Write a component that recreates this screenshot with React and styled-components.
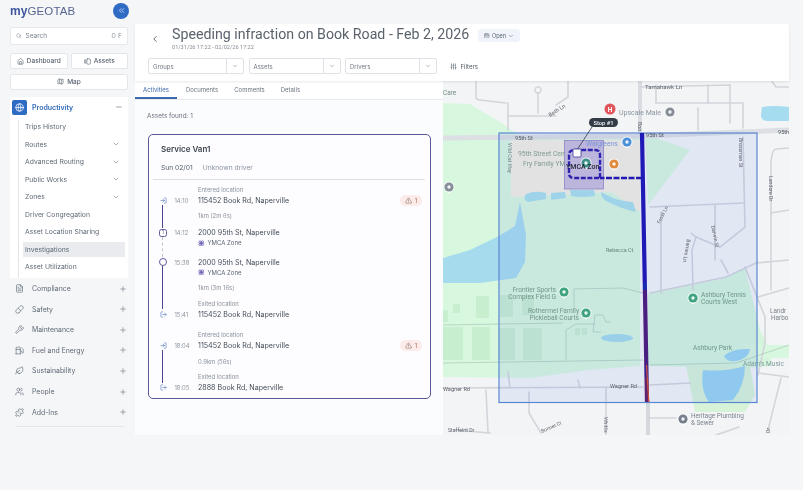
import React from 'react';
import styled, { createGlobalStyle } from 'styled-components';
import {
  Search, House, GalleryHorizontalEnd, Map as MapIcon, Globe, ChevronsLeft, ChevronLeft, ChevronDown,
  FileText, Pill, Wrench, Fuel, Leaf, Users, Puzzle, Plus, Minus, TriangleAlert,
  LogIn, LogOut, SlidersVertical, CalendarCheck, Flower,
} from 'lucide-react';

const Global = createGlobalStyle`
  html, body { margin: 0; padding: 0; background: #f5f6f8; }
  body { font-family: Inter, "Liberation Sans", sans-serif; overflow: hidden; }
`;

const Page = styled.div`
  width: 803px;
  height: 490px;
  display: flex;
  background: #f5f6f8;
  overflow: hidden;
  filter: blur(0.4px);
`;

/* sidebar */
const Sidebar = styled.aside`
  width: 135px;
  flex: none;
  padding: 2px 7px 0 10px;
  box-sizing: border-box;
  display: flex;
  flex-direction: column;
`;
const Brand = styled.div`
  height: 17px;
  display: flex;
  align-items: center;
  justify-content: space-between;
`;
const Logo = styled.div`
  font-family: "Liberation Sans", sans-serif;
  font-size: 11.5px;
  letter-spacing: 0.1px;
  color: #56648f;
  span { font-weight: 700; color: #3f569e; font-size: 12px; }
`;
const Collapse = styled.button`
  width: 16px;
  height: 16px;
  border: 0;
  padding: 0;
  margin-right: -1px;
  border-radius: 50%;
  background: #2e6cc4;
  color: #dbe8fa;
  display: flex;
  align-items: center;
  justify-content: center;
`;
const SearchBox = styled.div`
  height: 16px;
  margin-top: 8px;
  padding: 0 5px;
  background: #fff;
  border: 1px solid #e6e8ec;
  border-radius: 2px;
  display: flex;
  align-items: center;
  gap: 4px;
  font-size: 6.5px;
  color: #7b8490;
  em { margin-left: auto; font-style: normal; letter-spacing: 0.5px; font-size: 5.5px; }
`;
const QuickRow = styled.div`
  display: flex;
  gap: 3px;
  margin-top: ${p => p.$top}px;
`;
const QuickButton = styled.button`
  flex: 1;
  height: 16px;
  padding: 0;
  background: #fff;
  border: 1px solid #e4e6ea;
  border-radius: 2px;
  display: flex;
  align-items: center;
  justify-content: center;
  gap: 3px;
  font: 500 6.5px Inter, sans-serif;
  color: #58626e;
`;
const OpenGroup = styled.div`
  margin-top: 7px;
  background: #fff;
  height: 181px;
  box-sizing: border-box;
  padding: 3px 0 0 2px;
`;
const GroupHead = styled.div`
  height: 15px;
  padding-right: 5px;
  display: flex;
  align-items: center;
  gap: 5px;
  font-size: 7px;
  font-weight: 600;
  color: #2f68b8;
  > svg { margin-left: auto; color: #6b7480; }
`;
const IconTile = styled.span`
  width: 15px;
  height: 15px;
  border-radius: 2px;
  background: #2e6cc4;
  color: #fff;
  display: flex;
  align-items: center;
  justify-content: center;
`;
const SubList = styled.div`
  margin: 5px 0 0 6px;
  padding: 0 3px 0 4px;
  border-left: 1px solid #e3e5e9;
  display: flex;
  flex-direction: column;
  height: 158px;
  box-sizing: border-box;
`;
const SubItem = styled.div`
  height: 14.5px;
  margin-bottom: 3px;
  padding: 0 5px 0 2px;
  display: flex;
  align-items: center;
  justify-content: space-between;
  font-size: 6.8px;
  color: #5f6975;
  background: ${p => (p.$active ? '#e9ebef' : 'transparent')};
  svg { color: #848c96; }
`;
const NavList = styled.div`
  margin-top: 1px;
  display: flex;
  flex-direction: column;
`;
const NavRow = styled.div`
  height: 20.55px;
  padding: 0 1px 0 5px;
  display: flex;
  align-items: center;
  gap: 8px;
  font-size: 6.9px;
  color: #5f6975;
  svg { color: #4d5966; }
  svg:last-child { margin-left: auto; color: #7a828c; }
`;
const SideRule = styled.div`
  height: 1px;
  margin: 4px 4px 0 6px;
  background: #e4e6ea;
`;

/* main */
const Main = styled.main`
  width: 654px;
  flex: none;
  margin-top: 24px;
  height: 411px;
  display: flex;
  flex-direction: column;
`;
const Header = styled.header`
  height: 57px;
  flex: none;
  background: #fff;
  box-sizing: border-box;
  padding: 0 0 0 13px;
  box-shadow: 0 1px 2px rgba(60, 70, 90, 0.12);
  position: relative;
  z-index: 1;
`;
const TitleRow = styled.div`
  display: flex;
  align-items: center;
  height: 18px;
  padding-top: 1px;
  color: #4f5761;
`;
const Back = styled.span`
  width: 24px;
  margin-top: 9px;
  padding-left: 2px;
  box-sizing: border-box;
  display: flex;
  color: #4a525c;
`;
const Title = styled.h1`
  margin: 0;
  font: 400 14.2px Roboto, sans-serif;
  color: #5a626c;
  white-space: nowrap;
`;
const StatusPill = styled.span`
  margin-left: 9px;
  width: 42px;
  height: 13px;
  margin-top: 3px;
  border-radius: 3px;
  background: #f0f4fa;
  display: flex;
  align-items: center;
  justify-content: center;
  gap: 2px;
  font-size: 5.5px;
  color: #55606d;
`;
const DateRange = styled.div`
  margin-left: 24px;
  margin-top: 1px;
  font: 400 5.6px Roboto, sans-serif;
  color: #858c95;
`;
const Selectors = styled.div`
  display: flex;
  align-items: center;
  gap: 4.5px;
  margin-top: 8px;
`;
const Select = styled.div`
  width: ${p => p.$w}px;
  height: 16px;
  box-sizing: border-box;
  background: #fff;
  border: 1px solid #dfe2e6;
  border-radius: 2px;
  display: flex;
  align-items: center;
  font-size: 6px;
  color: #707882;
  span { flex: 1; padding-left: 4px; }
  i {
    width: 16px;
    height: 100%;
    border-left: 1px solid #dfe2e6;
    display: flex;
    align-items: center;
    justify-content: center;
  }
`;
const FilterLink = styled.div`
  margin-left: 8px;
  display: flex;
  align-items: center;
  gap: 4px;
  font-size: 6px;
  color: #4f5964;
`;
const Body = styled.div`
  flex: 1;
  min-height: 0;
  display: flex;
`;
const Panel = styled.section`
  width: 308px;
  flex: none;
  background: #fbfcfe;
`;
const Tabs = styled.nav`
  height: 18px;
  background: #fff;
  border-bottom: 1px solid #e7e9ed;
  display: flex;
  gap: 16px;
  box-sizing: content-box;
`;
const Tab = styled.div`
  height: 18px;
  display: flex;
  align-items: center;
  font-size: 6px;
  color: ${p => (p.$active ? '#3e68ab' : '#6b7480')};
  border-bottom: ${p => (p.$active ? '2px solid #3c69ad' : '2px solid transparent')};
  box-sizing: border-box;
  padding: ${p => (p.$active ? '0 8px' : '0')};
  margin-right: ${p => (p.$active ? '-7px' : '0')};
`;
const Found = styled.div`
  margin: 12px 0 0 12px;
  font-size: 6.4px;
  line-height: 9px;
  color: #6a727c;
`;
const Card = styled.article`
  margin: 13px 0 0 13px;
  width: 283px;
  height: 265px;
  box-sizing: border-box;
  background: #fdfdff;
  border: 1.5px solid #5a5599;
  border-radius: 5px;
  padding: 9px 8px 0 0;
`;
const CardTitle = styled.h2`
  margin: 0 0 0 12px;
  font-size: 8px;
  line-height: 10px;
  font-weight: 600;
  color: #3d4550;
`;
const CardMeta = styled.div`
  margin: 8.5px 0 0 12px;
  display: flex;
  gap: 10px;
  font-size: 6.7px;
  line-height: 10px;
  color: #56606b;
  span + span { color: #8a92a0; }
`;
const CardRule = styled.div`
  height: 1px;
  margin: 6.5px -3px 0 4px;
  background: #dcdfe3;
`;
const Events = styled.div`
  padding-left: 7px;
`;
const Event = styled.div`
  display: grid;
  grid-template-columns: 18.5px 23.5px 1fr auto;
  margin-top: ${p => p.$top}px;
  align-items: center;
`;
const EventLabel = styled.div`
  grid-column: 3;
  font-size: 5.9px;
  line-height: 10px;
  color: #8a919a;
`;
const Marker = styled.div`
  grid-column: 1;
  width: 14px;
  height: 11px;
  position: relative;
  display: flex;
  align-items: center;
  justify-content: center;
  color: #4d76b8;
`;
const Rail = styled.span`
  position: absolute;
  left: 6.25px;
  top: ${p => p.$top}px;
  height: ${p => p.$h}px;
  border-left: ${p => (p.$dotted ? '1px dashed #c0c3cc' : '1.5px solid #4a4690')};
`;
const StopBox = styled.span`
  width: 8px;
  height: 8px;
  box-sizing: border-box;
  border: 1px solid #5f5a9e;
  border-radius: ${p => (p.$round ? '50%' : '2.5px')};
  background: #fff;
  font-size: 4.5px;
  line-height: 6px;
  text-align: center;
  color: #5a5599;
`;
const EventTime = styled.div`
  grid-column: 2;
  font-size: 5.8px;
  color: #8b929b;
`;
const Address = styled.div`
  grid-column: 3;
  font-size: 7.1px;
  line-height: 11px;
  color: #444c57;
`;
const Badge = styled.div`
  grid-column: 4;
  width: 22px;
  height: 11px;
  border-radius: 6px;
  background: #fbecea;
  display: flex;
  align-items: center;
  justify-content: center;
  gap: 3px;
  font-size: 5.8px;
  color: #b1675f;
  svg { color: #6b4a48; }
`;
const ZoneName = styled.div`
  grid-column: 3;
  display: flex;
  align-items: center;
  gap: 3px;
  font-size: 6px;
  line-height: 9.5px;
  color: #5c6571;
  svg { color: #4a3fa8; }
`;
const Distance = styled.div`
  margin: ${p => p.$top}px 0 0 42px;
  font-size: 5.9px;
  line-height: 10px;
  color: #8a919a;
`;
const MapPane = styled.div`
  flex: 1;
  min-width: 0;
  background: #f3f4f6;
  svg { display: block; }
`;

/* map pieces */
const label = { fontFamily: 'Roboto, sans-serif' };

const Txt = ({ x, y, c = '#6f7880', s = 6.4, a, r, w, children }) => (
  <text
    x={x} y={y} fill={c} fontSize={s} textAnchor={a} fontWeight={w} style={label}
    transform={r ? `rotate(${r} ${x} ${y})` : undefined}
  >
    {children}
  </text>
);

const Pin = ({ x, y, c }) => (
  <g>
    <path d={`M${x - 5.5} ${y}a5.5 5.5 0 0 1 11 0c0 3-3 5-5.5 6.5c-2.5-1.5-5.5-3.5-5.5-6.5z`} fill="#fff" opacity="0.85" />
    <circle cx={x} cy={y} r="4.6" fill={c} />
    <circle cx={x} cy={y} r="1.7" fill="#fff" opacity="0.9" />
  </g>
);

// streets, in page coordinates
const roads = [
  'M476 80V97q0 3 4 3L506 103',
  'M568 80V97L556 105',
  'M508 103V130',
  'M508 116H556',
  'M538 93V113',
  'M640 87L730 85V123',
  'M656 85V103H733',
  'M708 85V103',
  'M698 108V130',
  'M733 103H743V128',
  'M771 80L776 87H789',
  'M789 148L776 149Q771 150 771 167V290',
  'M771 213L789 210',
  'M650 207L743 203',
  'M743 137L745 227L720 247L696 237L691 233',
  'M715 205V260',
  'M661 212V293',
  'M696 237L692 250L693 290',
  'M650 293L726 277L756 263L789 260',
  'M721 260L728 273',
  'M745 267L765 317V343L758 375',
  'M758 297L789 288',
  'M758 373L789 377',
  'M781 378L768 430',
  'M716 435L739 427',
  'M650 418H676',
  'M650 385L690 383',
  'M443 388L643 387',
  'M486 390L488 433',
  'M529 392V413L541 433',
  'M606 388V435',
  'M508 372L510 388',
  'M578 380L580 388',
  'M455 430L490 433',
];

// footpaths through the park
const paths = [
  'M443 363L643 360',
  'M650 365L736 363L789 345',
  'M574 289L623 288L643 293',
  'M574 289V310',
  'M566 360V330L576 324H595',
  'M595 315H603L606 322H611',
  'M595 315L593 332H601',
  'M443 325L563 323',
];

const stripes = [
  ['#1f1ab5', 133, 283], ['#1a2ab0', 283, 290], ['#4a1f80', 290, 365], ['#3a2090', 365, 378], ['#5e2470', 378, 402],
];

const fields = [
  [443, 327, 20, 33], [472, 327, 18, 33], [498, 328, 17, 32], [523, 328, 19, 32], [476, 296, 13, 22],
  [453, 304, 7, 9], [443, 310, 5, 12], [500, 295, 13, 22], [522, 295, 12, 20], [575, 328, 5, 7], [582, 328, 5, 7],
];

const MapView = () => (
  <svg width="346" height="354" viewBox="443 81 346 354">
    <rect x="443" y="81" width="346" height="354" fill="#f3f4f6" />
    {/* park and ground cover */}
    <path d="M443 103L470 104L500 122L520 136L640 136L640 366L590 370L530 378L443 377Z" fill="#d8f7df" />
    <path d="M645 134L690 150L648 205Z" fill="#d8f7df" />
    <path d="M648 294L726 278L745 268L760 330L771 352V366L745 368L648 366Z" fill="#d4f5dc" />
    <path d="M745 345H789V358H745Z" fill="#d8f7df" />
    <path d="M511 140H640V212L612 192L511 197Z" fill="#f3efe2" />
    <path d="M686 366H750L755 395L745 412H695Z" fill="#d6f3d8" />
    {fields.map(([x, y, w, h]) => (
      <rect key={`${x}${y}`} x={x} y={y} width={w} height={h} fill="#c8eed0" />
    ))}
    {/* water */}
    <path d="M443 258L470 250L499 236L515 226L520 202L526 235L525 262L516 278L480 283L443 283Z" fill="#a6dbee" />
    <path d="M526 194q10-4 20-1v6l-18 3q-6-3-2-8zM551 193l14-1l1 6l-15 2zM570 190h24l1 6q-12 2-24 0zM601 192l12 6q8 3 20 4l3 10q-14-3-28-10q-7-3-7-10z" fill="#aadfea" />
    <ellipse cx="617" cy="338" rx="16" ry="4" fill="#a3daea" />
    <path d="M762 107q12-2 27 0V121H768q-7 0-7-6z" fill="#a6dcf0" />
    <path d="M703 370Q725 372 745 366Q745 385 733 400L709 402Q700 390 703 370Z" fill="#98d3f0" />
    <path d="M724 356q8-8 26-7q-1 8-10 11q-12 4-16-4z" fill="#98d3f0" />
    {/* streets */}
    <path d="M443 138L640 136L789 130" stroke="#dcdfe3" strokeWidth="5" fill="none" />
    <path d="M640 81V135" stroke="#d9dce1" strokeWidth="4" fill="none" />
    <path d="M648 400V435" stroke="#d4d7dc" strokeWidth="4" fill="none" />
    {roads.map(d => (
      <path key={d} d={d} stroke="#d2d5da" strokeWidth="1.6" fill="none" strokeLinecap="round" />
    ))}
    {paths.map(d => (
      <path key={d} d={d} stroke="#a9c9b8" strokeWidth="0.7" fill="none" />
    ))}
    <circle cx="538" cy="90" r="3" stroke="#d2d5da" strokeWidth="1.300" fill="#f3f4f6" />
    {/* zone overlays */}
    <rect x="499" y="133" width="258" height="269.500" fill="rgba(60, 100, 230, 0.09)" stroke="#5a87d4" strokeWidth="1.2" />
    <rect x="564.500" y="140.500" width="39" height="48.500" fill="rgba(110, 90, 210, 0.32)" stroke="#8a83c8" strokeWidth="0.8" />
    {/* labels */}
    <Txt x={443} y={95} c="#6f8c80">Care</Txt>
    <Txt x={645} y={89} c="#5d656e" s={6}>Tamahawk Ln</Txt>
    <Txt x={550} y={117} r={-32} s={5.6} c="#5f666e">Beth Ln</Txt>
    <Txt x={619} y={115} c="#8b95a0" s={7}>Upscale Male</Txt>
    <Txt x={515} y={140} c="#4f565e" s={5.6}>95th St</Txt>
    <Txt x={646} y={137} c="#4f565e" s={5.6}>95th St</Txt>
    <Txt x={778} y={134} c="#4f565e" s={5.6}>95th</Txt>
    <Txt x={638} y={122} r={90} s={5.2} c="#5f666e">Boo</Txt>
    <Txt x={508} y={143} r={90} s={5.2} c="#727a82">Wild Cat Way</Txt>
    <Txt x={518} y={156} c="#7f9c90" s={6.8}>95th Street Cen</Txt>
    <Txt x={523} y={166} c="#7f9c90" s={6.8}>Fry Family YM</Txt>
    <Txt x={586} y={146} c="#7a95d4" s={6.8}>Walgreens</Txt>
    <Txt x={739} y={138} r={90} s={5.2} c="#5f666e">Brossman St</Txt>
    <Txt x={769} y={176} r={90} s={5.2} c="#5f666e">Landore Dr</Txt>
    <Txt x={660} y={224} r={-64} s={5.2} c="#5f666e">Frost Ln</Txt>
    <Txt x={711} y={226} r={78} s={5.2} c="#5f666e">Darwin St</Txt>
    <Txt x={687} y={239} r={100} s={5.2} c="#5f666e">Barnes Ln</Txt>
    <Txt x={606} y={252} s={5.4} c="#6c8478">Rebecca Ct</Txt>
    <Txt x={556} y={292} a="end" c="#72968a" s={6.6}>Frontier Sports</Txt>
    <Txt x={556} y={299} a="end" c="#72968a" s={6.6}>Complex Field G</Txt>
    <Txt x={579} y={313} a="end" c="#72968a" s={6.6}>Rothermel Family</Txt>
    <Txt x={579} y={320} a="end" c="#72968a" s={6.6}>Pickleball Courts</Txt>
    <Txt x={701} y={297} c="#72968a" s={6.6}>Ashbury Tennis</Txt>
    <Txt x={701} y={304} c="#72968a" s={6.6}>Courts West</Txt>
    <Txt x={693} y={350} c="#72968a" s={6.6}>Ashbury Park</Txt>
    <Txt x={743} y={366} c="#7f9c9c" s={6.6}>Adam's Music</Txt>
    <Txt x={770} y={313} c="#7a8288" s={6.4}>Landr</Txt>
    <Txt x={771} y={320} c="#7a8288" s={6.4}>Harbo</Txt>
    <Txt x={443} y={391} c="#5f666e" s={5.6}>Wagner Rd</Txt>
    <Txt x={610} y={388} c="#5f666e" s={5.6}>Wagner Rd</Txt>
    <Txt x={691} y={418} c="#7a8490" s={6.4}>Heritage Plumbing</Txt>
    <Txt x={691} y={425} c="#7a8490" s={6.4}>&amp; Sewer</Txt>
    <Txt x={448} y={432} c="#5f666e" s={5.2}>Staffelrit Dr</Txt>
    <Txt x={604} y={417} r={90} s={5.2} c="#5f666e">Whitlis</Txt>
    <Txt x={542} y={433} r={-24} s={5} c="#5f666e">Bonnet Ct</Txt>
    <Txt x={770} y={433} r={-90} s={5.2} c="#5f666e">Dr</Txt>
    {/* pins */}
    <circle cx="610" cy="109" r="5.500" fill="#e0555b" />
    <Txt x={610} y={111.500} a="middle" c="#fff" s={6.500} w={700}>H</Txt>
    <Pin x={670} y={112} c="#858e98" />
    <Pin x={449} y={187} c="#858e98" />
    <Pin x={627} y={142} c="#4a90d9" />
    <Pin x={614} y={164} c="#e28a3c" />
    <Pin x={586} y={163} c="#3d8f8a" />
    <Pin x={564} y={292} c="#3fa37f" />
    <Pin x={586} y={313} c="#3fa37f" />
    <Pin x={693} y={298} c="#3fa37f" />
    <Pin x={683} y={419} c="#76808c" />
    {/* route */}
    {stripes.map(([c, from, to]) => {
      const at = y => 642 + ((y - 133) / 269) * 5;
      return <path key={from} d={`M${at(from)} ${from}L${at(to)} ${to}`} stroke={c} strokeWidth="4.200" fill="none" />;
    })}
    <path d="M646.500 365L648.800 402" stroke="#d0503a" strokeWidth="1.200" fill="none" />
    <path d="M642 178H600" stroke="#2119b0" strokeWidth="2.400" strokeDasharray="6 1.500" fill="none" />
    <path d="M599 178H574q-5 0-5-5V155q0-5 5-5H595q5 0 5 5V178" stroke="#2d22b0" strokeWidth="2.400" strokeDasharray="5 1.600" fill="none" />
    <Txt x={566} y={169} c="#1f2530" s={7} w={500}>YMCA Zon</Txt>
    <path d="M592 127L577 150" stroke="#2f3a45" strokeWidth="0.800" />
    <rect x="573" y="149" width="8" height="8" rx="1" fill="#fff" stroke="#3a3a9a" strokeWidth="0.800" />
    <rect x="589" y="118" width="29" height="9" rx="4.500" fill="#323c47" />
    <Txt x={603.500} y={124.500} a="middle" c="#f2f4f6" s={5.800} w={500}>Stop #1</Txt>
  </svg>
);

const nav = [
  ['Compliance', FileText], ['Safety', Pill], ['Maintenance', Wrench], ['Fuel and Energy', Fuel],
  ['Sustainability', Leaf], ['People', Users], ['Add-Ins', Puzzle],
];
const subs = [
  ['Trips History'], ['Routes', true], ['Advanced Routing', true], ['Public Works', true], ['Zones', true],
  ['Driver Congregation'], ['Asset Location Sharing'], ['Investigations', false, true], ['Asset Utilization'],
];

const Alert = () => (
  <Badge><TriangleAlert size={7} strokeWidth={1.5} />1</Badge>
);

const Zone = () => (
  <ZoneName><Flower size={6.500} strokeWidth={2} />YMCA Zone</ZoneName>
);

export default function App() {
  return (
    <Page>
      <Global />
      <Sidebar>
        <Brand>
          <Logo><span>my</span>GEOTAB</Logo>
          <Collapse><ChevronsLeft size={9} strokeWidth={2} /></Collapse>
        </Brand>
        <SearchBox><Search size={5.500} />Search<em>O F</em></SearchBox>
        <QuickRow $top={8}>
          <QuickButton><House size={7} />Dashboard</QuickButton>
          <QuickButton><GalleryHorizontalEnd size={7} />Assets</QuickButton>
        </QuickRow>
        <QuickRow $top={4.500}>
          <QuickButton><MapIcon size={7} />Map</QuickButton>
        </QuickRow>
        <OpenGroup>
          <GroupHead>
            <IconTile><Globe size={9} /></IconTile>
            Productivity
            <Minus size={8} />
          </GroupHead>
          <SubList>
            {subs.map(([name, more, active]) => (
              <SubItem key={name} $active={active}>
                {name}
                {more && <ChevronDown size={8} />}
              </SubItem>
            ))}
          </SubList>
        </OpenGroup>
        <NavList>
          {nav.map(([name, Icon]) => (
            <NavRow key={name}>
              <Icon size={9} strokeWidth={1.5} />
              {name}
              <Plus size={8} />
            </NavRow>
          ))}
        </NavList>
        <SideRule />
      </Sidebar>
      <Main>
        <Header>
          <TitleRow>
            <Back><ChevronLeft size={10} /></Back>
            <Title>Speeding infraction on Book Road - Feb 2, 2026</Title>
            <StatusPill><CalendarCheck size={5.500} />Open<ChevronDown size={6} /></StatusPill>
          </TitleRow>
          <DateRange>01/31/26 17:22 - 02/02/26 17:22</DateRange>
          <Selectors>
            <Select $w={96}><span>Groups</span><i><ChevronDown size={6} /></i></Select>
            <Select $w={92}><span>Assets</span><i><ChevronDown size={6} /></i></Select>
            <Select $w={92}><span>Drivers</span><i><ChevronDown size={6} /></i></Select>
            <FilterLink><SlidersVertical size={7} />Filters</FilterLink>
          </Selectors>
        </Header>
        <Body>
          <Panel>
            <Tabs>
              <Tab $active>Activities</Tab>
              <Tab>Documents</Tab>
              <Tab>Comments</Tab>
              <Tab>Details</Tab>
            </Tabs>
            <Found>Assets found: 1</Found>
            <Card>
              <CardTitle>Service Van1</CardTitle>
              <CardMeta><span>Sun 02/01</span><span>Unknown driver</span></CardMeta>
              <CardRule />
              <Events>
                <Event $top={4.500}>
                  <EventLabel>Entered location</EventLabel>
                  <Marker><LogIn size={7} /><Rail $top={10} $h={23} /></Marker>
                  <EventTime>14:10</EventTime>
                  <Address>115452 Book Rd, Naperville</Address>
                  <Alert />
                </Event>
                <Distance $top={5.500}>1km (2m 6s)</Distance>
                <Event $top={6}>
                  <Marker><StopBox>1</StopBox><Rail $top={10} $h={20} $dotted /></Marker>
                  <EventTime>14:12</EventTime>
                  <Address>2000 95th St, Naperville</Address>
                  <Zone />
                </Event>
                <Event $top={9}>
                  <Marker><StopBox $round /><Rail $top={9} $h={43} /></Marker>
                  <EventTime>15:38</EventTime>
                  <Address>2000 95th St, Naperville</Address>
                  <Zone />
                </Event>
                <Distance $top={6}>1km (3m 16s)</Distance>
                <Event $top={6}>
                  <EventLabel>Exited location</EventLabel>
                  <Marker><LogOut size={7} /></Marker>
                  <EventTime>15:41</EventTime>
                  <Address>115452 Book Rd, Naperville</Address>
                </Event>
                <Event $top={9.500}>
                  <EventLabel>Entered location</EventLabel>
                  <Marker><LogIn size={7} /><Rail $top={10} $h={33} /></Marker>
                  <EventTime>18:04</EventTime>
                  <Address>115452 Book Rd, Naperville</Address>
                  <Alert />
                </Event>
                <Distance $top={6}>0.9km (56s)</Distance>
                <Event $top={5.500}>
                  <EventLabel>Exited location</EventLabel>
                  <Marker><LogOut size={7} /></Marker>
                  <EventTime>18:05</EventTime>
                  <Address>2888 Book Rd, Naperville</Address>
                </Event>
              </Events>
            </Card>
          </Panel>
          <MapPane><MapView /></MapPane>
        </Body>
      </Main>
    </Page>
  );
}
